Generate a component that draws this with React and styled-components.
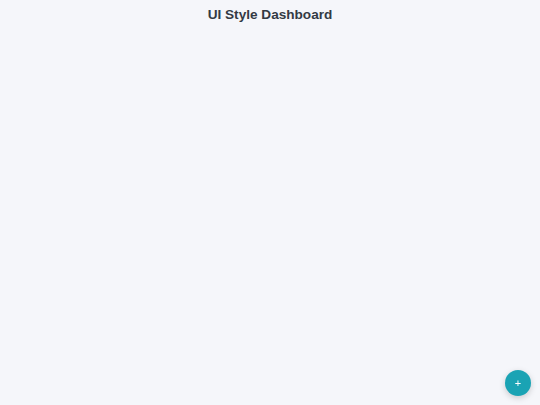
import React from "react";
import styled, { createGlobalStyle } from "styled-components";

const Global = createGlobalStyle`
  html, body { margin: 0; padding: 0; height: 100%; }
  body { background: #f5f6fa; font-family: "Liberation Sans", Arial, sans-serif; }
  #root { min-height: 100vh; }
`;

const Page = styled.div`
  min-height: 100vh;
  display: flex;
  flex-direction: column;
  align-items: center;
  padding-top: 6px;
  box-sizing: border-box;
`;

const Title = styled.h1`
  margin: 0;
  font-size: 13.6px;
  line-height: 18px;
  font-weight: 700;
  color: #333a44;
`;

const Fab = styled.button`
  position: fixed;
  right: 9px;
  bottom: 9px;
  width: 26px;
  height: 26px;
  border-radius: 50%;
  border: none;
  background: #1aa3b4;
  color: #fff;
  font-size: 11px;
  line-height: 1;
  display: flex;
  align-items: center;
  justify-content: center;
  padding: 0;
  box-shadow: 0 2px 6px rgba(0, 0, 0, 0.18);
  font-family: "Liberation Sans", Arial, sans-serif;
`;

export default function App() {
  return (
    <>
      <Global />
      <Page>
        <Title>UI Style Dashboard</Title>
      </Page>
      <Fab aria-label="Add">+</Fab>
    </>
  );
}
